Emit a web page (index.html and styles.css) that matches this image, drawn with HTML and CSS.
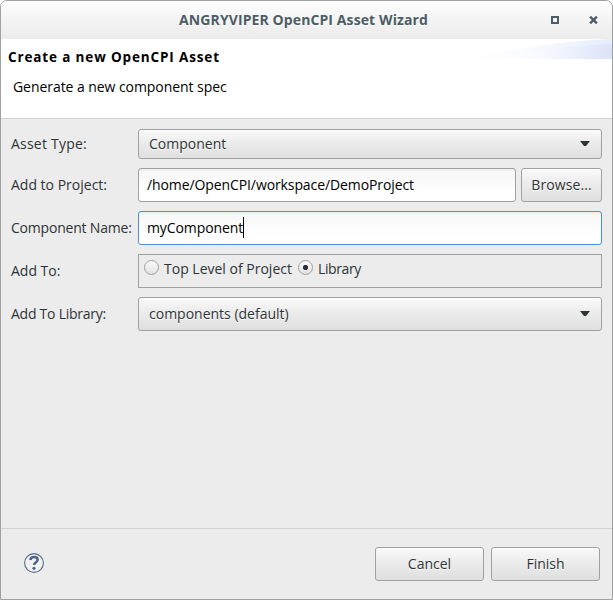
FILE: index.html
```html
<!DOCTYPE html>
<html lang="en">
<head>
<meta charset="utf-8">
<title>ANGRYVIPER OpenCPI Asset Wizard</title>
<link rel="stylesheet" href="styles.css">
</head>
<body>
<main class="window">
  <header class="titlebar">
    <span class="title">ANGRYVIPER OpenCPI Asset Wizard</span>
    <div class="controls">
      <svg width="8" height="8" viewBox="0 0 8 8" shape-rendering="crispEdges"><path d="M1 1h6v6H1z" fill="none" stroke="#4c5d66" stroke-width="2"/></svg>
      <svg width="9" height="8" viewBox="0 0 9 8"><path d="M1.1.7l6.8 6.6M7.9.7L1.1 7.3" stroke="#4c5d66" stroke-width="2.5"/></svg>
    </div>
  </header>
  <section class="banner">
    <svg class="swoosh" width="142" height="20" viewBox="0 0 142 20">
      <defs>
        <linearGradient id="far"><stop offset="0" stop-color="#fff"/><stop offset=".35" stop-color="#fbfcff"/><stop offset="1" stop-color="#e6edfb"/></linearGradient>
        <linearGradient id="near"><stop offset="0" stop-color="#fff"/><stop offset=".35" stop-color="#f7f9fe"/><stop offset="1" stop-color="#dbe3f7"/></linearGradient>
      </defs>
      <path d="M0 20C45 9 92 2 142 0V20z" fill="url(#far)"/>
      <path d="M36 20C70 11 104 6 142 5V20z" fill="url(#near)"/>
    </svg>
    <h1 class="heading">Create a new OpenCPI Asset</h1>
    <p class="message">Generate a new component spec</p>
  </section>
  <section class="form">
    <div class="row row-short">
      <span class="label wide">Asset Type:</span>
      <div class="control select"><span>Component</span><i class="arrow"></i></div>
    </div>
    <div class="row">
      <span class="label">Add to Project:</span>
      <div class="control entry"><span class="path">/home/OpenCPI/workspace/DemoProject</span></div>
      <div class="control button browse">Browse...</div>
    </div>
    <div class="row">
      <span class="label tight">Component Name:</span>
      <div class="control entry focused"><span class="name">myComponent</span><i class="caret"></i></div>
    </div>
    <div class="row">
      <span class="label">Add To:</span>
      <div class="group">
        <i class="radio"></i><span class="option">Top Level of Project</span>
        <i class="radio checked"></i><span class="option library">Library</span>
      </div>
    </div>
    <div class="row">
      <span class="label tighter">Add To Library:</span>
      <div class="control select"><span>components (default)</span><i class="arrow"></i></div>
    </div>
  </section>
  <footer class="footer">
    <svg class="help" width="22" height="22" viewBox="0 0 22 22">
      <circle cx="11" cy="11" r="9.4" fill="#f1f1f1" stroke="#566a8f" stroke-width="1.1"/>
      <path d="M7.3 8C7.6 5.9 9.2 5 11.1 5c2.1 0 3.6 1.1 3.6 2.8 0 2.5-3.6 2.5-3.6 5.2" fill="none" stroke="#50648a" stroke-width="2.5"/>
      <circle cx="11" cy="16.3" r="1.6" fill="#50648a"/>
    </svg>
    <div class="control button">Cancel</div>
    <div class="control button">Finish</div>
  </footer>
</main>
</body>
</html>
```
FILE: styles.css
```css
* { box-sizing: border-box; }

body {
  margin: 0;
  background: #fff;
  color: #2e3436;
  font: 14px/20px "Open Sans", "Noto Sans", sans-serif;
}

.window {
  display: flex;
  flex-direction: column;
  width: 613px;
  height: 600px;
  overflow: hidden;
  background: #ececec;
  border: 1px solid #a0a0a0;
  border-radius: 7px 7px 0 0;
}

.titlebar {
  display: grid;
  grid-template-columns: 1fr auto 1fr;
  align-items: center;
  height: 38px;
  padding-right: 14px;
  padding-left: 11px;
  background: linear-gradient(#fdfdfd, #ebebeb);
}
.title {
  grid-column: 2;
  margin-left: -3px;
  color: #4c5d66;
  font-weight: 700;
  letter-spacing: .1px;
  text-shadow: 0 1px #fff;
}
.controls { display: flex; justify-content: flex-end; gap: 30px; }

.banner {
  position: relative;
  height: 80px;
  padding: 8px 7px;
  background: #fff;
  border-bottom: 1px solid #d0d0d0;
  color: #000;
}
.swoosh { position: absolute; top: 0; right: 0; }
.heading {
  margin: 0;
  font-size: 13.5px;
  line-height: 20px;
  font-weight: 700;
  letter-spacing: .86px;
}
.message { margin: 10px 0 0 5px; letter-spacing: -.06px; }

.form {
  display: flex;
  flex: 1;
  flex-direction: column;
  gap: 9px;
  padding: 10px 10px 0;
}
.row { display: flex; align-items: center; height: 34px; }
.row-short { height: 30px; }
.label { flex: 0 0 127px; white-space: nowrap; }
.wide { letter-spacing: .22px; }
.tight { letter-spacing: -.2px; }
.tighter { letter-spacing: -.25px; }

.control {
  display: flex;
  align-items: center;
  height: 100%;
  border: 1px solid #a0a0a0;
  border-radius: 3px;
}
.select {
  flex: 1;
  justify-content: space-between;
  padding: 0 11px 0 10px;
}
.select, .button {
  background: linear-gradient(#fafafa, #ededed 40%, #dfdfdf);
  box-shadow: inset 0 1px #fff;
  text-shadow: 0 1px #fff;
}
.arrow {
  width: 10px;
  height: 5px;
  margin-top: -1px;
  background: #2e3436;
  clip-path: polygon(0 0, 100% 0, 60% 100%, 40% 100%);
}
.button { justify-content: center; }
.browse { width: 81px; margin-left: 5px; letter-spacing: .1px; }

.entry {
  flex: 1;
  padding-left: 8px;
  background: linear-gradient(#ededed, #f7f7f7 3px, #fff 75%);
  color: #000;
}
.focused { border-color: #4a90d9; }
.path { letter-spacing: -.1px; }
.name { letter-spacing: -.1px; }
.caret { width: 1px; height: 21px; margin-top: -1px; background: #000; }

.group {
  display: flex;
  flex: 1;
  height: 100%;
  padding: 5px 5px 0;
  border: 1px solid #a0a0a0;
}
.radio {
  width: 15px;
  height: 15px;
  border: 1px solid #a0a0a0;
  border-radius: 50%;
  background: linear-gradient(#fcfcfc, #e0e0e0);
}
.checked {
  margin-left: 6px;
  background: radial-gradient(circle, #2e3436 2.2px, transparent 3px), linear-gradient(#fcfcfc, #e0e0e0);
}
.option { margin: -1px 0 0 5px; height: 20px; }
.library { letter-spacing: -.4px; }

.footer {
  display: flex;
  gap: 7px;
  height: 71px;
  padding: 18px 12px 0 22px;
  border-top: 1px solid #d2d2d2;
}
.footer .button { width: 109px; height: 34px; }
.help { margin: 5px auto 0 0; }
```
